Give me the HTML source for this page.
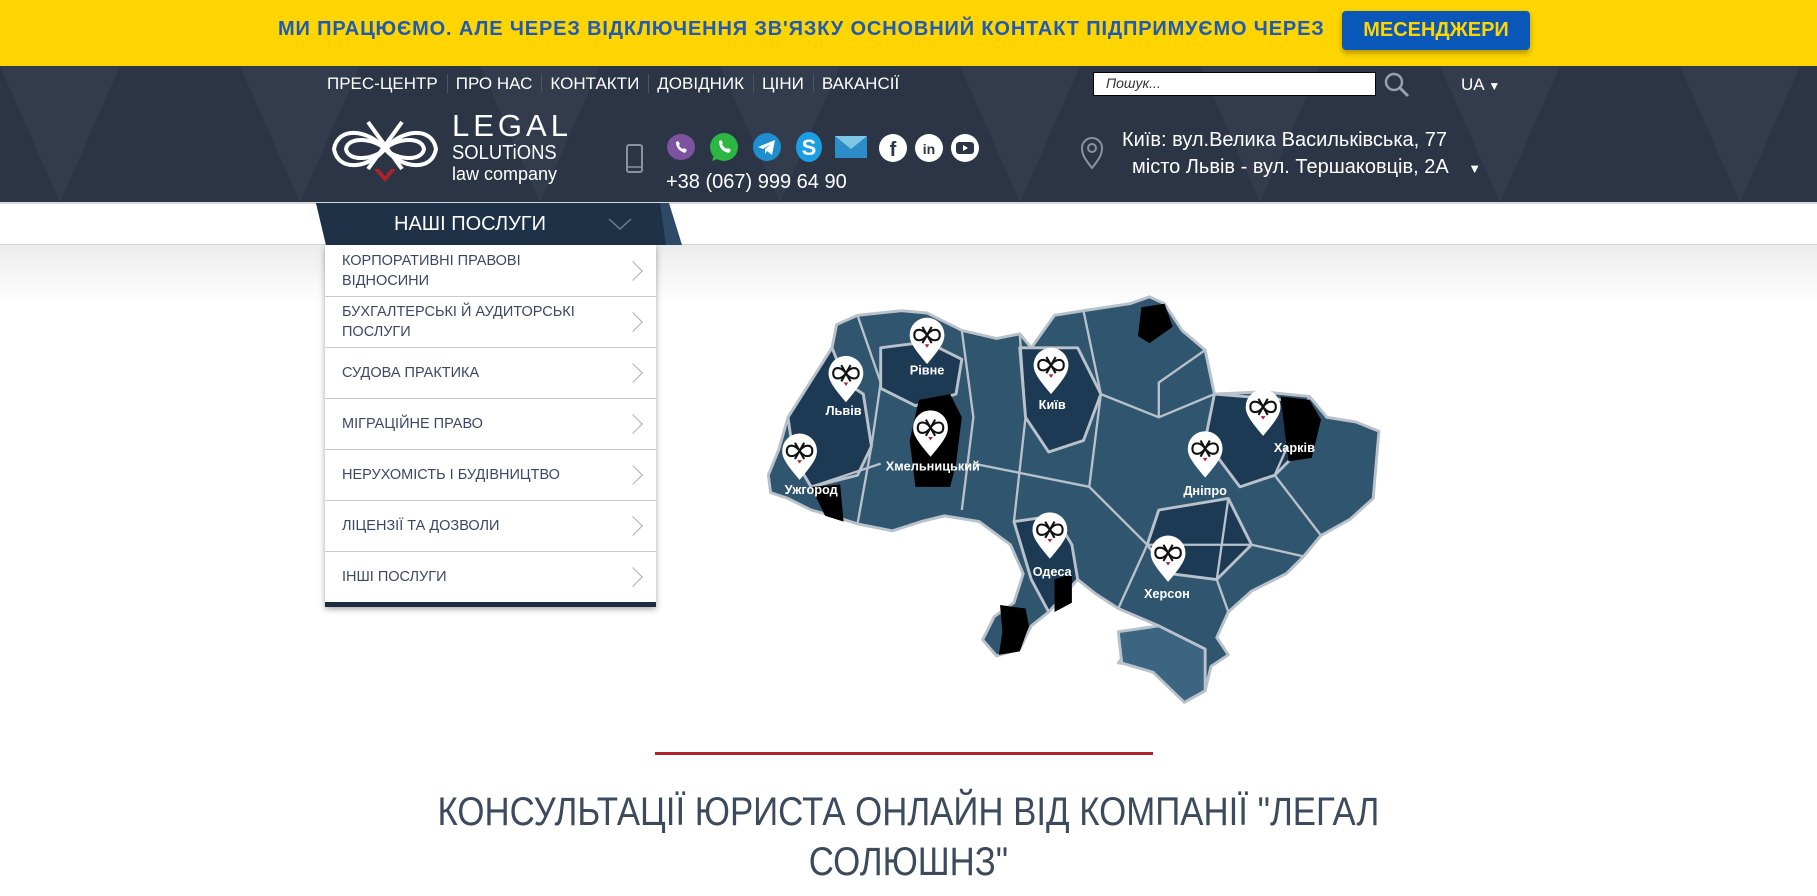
<!DOCTYPE html>
<html><head><meta charset="utf-8"><style>
*{margin:0;padding:0;box-sizing:border-box}
body{width:1817px;height:896px;overflow:hidden;background:#fff;font-family:"Liberation Sans",sans-serif;position:relative}
.abs{position:absolute}
#banner{left:0;top:0;width:1817px;height:66px;background:#fed500}
#banner .t{left:278px;top:18px;font-weight:bold;font-size:20px;color:#1f5bb5;letter-spacing:0.85px;white-space:nowrap}
#banner .b{left:1342px;top:11px;width:188px;height:39px;background:#0a57ba;border-radius:4px;box-shadow:0 3px 6px rgba(0,0,0,.3);color:#fed500;font-weight:bold;font-size:20px;text-align:center;line-height:39px}
#hdr{left:0;top:66px;width:1817px;height:136px;background:#2b3545}
.nav{top:74px;left:327px;color:#fff;font-size:17px;white-space:nowrap}
.nav span{padding:0 9px 0 8px;border-left:1px solid #4a5566}
.nav span:first-child{padding-left:0;border:none}
.search{left:1093px;top:72px;width:283px;height:24px;background:#fff;border:1px solid #000;font-style:italic;font-size:14px;color:#333;padding:2px 12px}
.addr{color:#fff;font-size:20px;white-space:nowrap}
.menu{left:325px;top:245px;width:331px;background:#fff;box-shadow:0 2px 6px rgba(0,0,0,.35);border-bottom:5px solid #1e2e42}
.menu div{height:51px;border-top:1px solid #c7c9d1;color:#3c4766;font-size:14.5px;padding:0 60px 0 17px;display:flex;align-items:center;position:relative;line-height:20px}
.menu div:first-child{border-top:none}
.menu div:after{content:"";position:absolute;right:16px;top:50%;width:13px;height:13px;border-right:1.5px solid #a8aab4;border-top:1.5px solid #a8aab4;transform:translateY(-50%) rotate(45deg)}
h1{position:absolute;left:0;width:1817px;top:787px;text-align:center;font-weight:normal;font-size:40px;line-height:50px;color:#3b4a5c;transform:scaleX(0.87);transform-origin:908px 0}
</style></head><body>
<div id="banner" class="abs"><div class="t abs">МИ ПРАЦЮЄМО. АЛЕ ЧЕРЕЗ ВІДКЛЮЧЕННЯ ЗВ'ЯЗКУ ОСНОВНИЙ КОНТАКТ ПІДПРИМУЄМО ЧЕРЕЗ</div><div class="b abs">МЕСЕНДЖЕРИ</div></div>
<div id="hdr" class="abs">
<svg width="1817" height="136" style="position:absolute;left:0;top:0;opacity:.035"><g fill="#fff"><polygon points="0,0 60,136 120,0"/><polygon points="240,0 300,136 360,0"/><polygon points="480,0 540,136 600,0"/><polygon points="720,0 780,136 840,0"/><polygon points="960,0 1020,136 1080,0"/><polygon points="1200,0 1260,136 1320,0"/><polygon points="1440,0 1500,136 1560,0"/><polygon points="1680,0 1740,136 1800,0"/></g></svg>
</div>
<div class="nav abs"><span>ПРЕС-ЦЕНТР</span><span>ПРО НАС</span><span>КОНТАКТИ</span><span>ДОВІДНИК</span><span>ЦІНИ</span><span>ВАКАНСІЇ</span></div>
<div class="search abs">Пошук...</div>
<svg class="abs" style="left:1383px;top:71px" width="28" height="28"><circle cx="11" cy="11" r="8" fill="none" stroke="#9aa0aa" stroke-width="2.5"/><line x1="17" y1="17" x2="25" y2="25" stroke="#9aa0aa" stroke-width="3"/></svg>
<div class="abs" style="left:1461px;top:75px;color:#fff;font-size:17px">UA <span style="font-size:12px">▼</span></div>
<svg class="abs" style="left:328px;top:114px" width="115" height="75" viewBox="0 0 115 75"><g fill="none" stroke="#fff" stroke-width="4"><path d="M57,35 C40,15 10,12 6,35 C10,58 40,55 57,35 C74,15 104,12 108,35 C104,58 74,55 57,35Z"/><path d="M57,35 C46,24 20,22 18,35 C20,48 46,46 57,35 C68,24 94,22 96,35 C94,48 68,46 57,35Z"/><path d="M40,8 L74,55 M74,8 L40,55"/></g><path d="M46,55 L57,68 L68,55 L63,55 L57,62 L51,55Z" fill="#b0212b"/></svg>
<div class="abs" style="left:452px;top:110px;color:#fff;font-size:31px;letter-spacing:4px;line-height:32px">LEGAL</div>
<div class="abs" style="left:452px;top:143px;color:#fff;font-size:20px;line-height:20px;transform:scaleX(.92);transform-origin:0 0">SOLUTiONS</div>
<div class="abs" style="left:452px;top:164px;color:#fff;font-size:18px;line-height:20px">law company</div>
<svg class="abs" style="left:625px;top:144px" width="20" height="30"><rect x="2" y="1" width="15" height="27" rx="2" fill="none" stroke="#8a92a0" stroke-width="2"/><line x1="3" y1="23" x2="16" y2="23" stroke="#8a92a0" stroke-width="1.5"/></svg>
<svg class="abs" style="left:665px;top:132px" width="320" height="32">
<ellipse cx="16" cy="15" rx="14" ry="13" fill="#7d529e"/><path d="M9,28 l3,-4 l4,0z" fill="#7d529e"/><path d="M11,10 q0,8 9,11 l2,-3 l-3,-2 l-1,1 q-3,-1 -4,-4 l1,-1 l-2,-3z" fill="#fff"/>
<circle cx="59" cy="15" r="14" fill="#2bb741"/><path d="M47,29 l3,-8 l5,5z" fill="#2bb741"/><path d="M54,9 q0,10 10,12 l2,-3 l-3,-2 l-1,1 q-4,-2 -5,-5 l1,-1 l-2,-3z" fill="#fff"/>
<circle cx="102" cy="15" r="14" fill="#1d8fd1"/><path d="M93,15 l17,-7 l-3,15 l-5,-4 l-2,3 l0,-5 l6,-5 l-8,5z" fill="#fff"/>
<ellipse cx="144" cy="15" rx="13" ry="15" fill="#1c9ee3"/><text x="144" y="23" text-anchor="middle" font-size="22" font-weight="bold" fill="#fff" font-family="Liberation Sans">S</text>
<rect x="170" y="4" width="32" height="22" fill="#2b8ec9"/><path d="M170,4 l16,13 l16,-13z" fill="#7fc7e6"/>
<circle cx="228" cy="16" r="14" fill="#fff"/><text x="228" y="24" text-anchor="middle" font-size="20" font-weight="bold" fill="#2b3545" font-family="Liberation Sans">f</text>
<circle cx="264" cy="16" r="14" fill="#fff"/><text x="264" y="22" text-anchor="middle" font-size="14" font-weight="bold" fill="#2b3545" font-family="Liberation Sans">in</text>
<circle cx="300" cy="16" r="14" fill="#fff"/><rect x="291" y="10" width="18" height="12" rx="3" fill="#2b3545"/><path d="M298,13 l5,3 l-5,3z" fill="#fff"/>
</svg>
<div class="abs" style="left:666px;top:171px;color:#fff;font-size:20px">+38 (067) 999 64 90</div>
<svg class="abs" style="left:1080px;top:136px" width="26" height="34"><path d="M12,32 C4,22 2,18 2,12 A10,10 0 0 1 22,12 C22,18 20,22 12,32Z" fill="none" stroke="#8a92a0" stroke-width="2"/><circle cx="12" cy="12" r="4" fill="none" stroke="#8a92a0" stroke-width="2"/></svg>
<div class="addr abs" style="left:1122px;top:129px">Київ: вул.Велика Васильківська, 77</div>
<div class="addr abs" style="left:1132px;top:156px">місто Львів - вул. Тершаковців, 2А <span style="font-size:13px;margin-left:14px">▼</span></div>
<div class="abs" style="left:0;top:202px;width:1817px;height:2px;background:#d6d8dc"></div>
<div class="abs" style="left:0;top:245px;width:1817px;height:60px;background:linear-gradient(#ececec,#fff)"></div>
<div class="abs" style="left:0;top:244px;width:1817px;height:1px;background:#d4d4d4"></div>
<svg class="abs" style="left:314px;top:203px" width="370" height="43"><polygon points="2,0 355,0 368,42 12,42" fill="#2c4a68"/><polygon points="2,0 346,0 352,42 12,42" fill="#1f3147"/></svg>
<div class="abs" style="left:394px;top:213px;color:#fff;font-size:20px">НАШІ ПОСЛУГИ</div>
<svg class="abs" style="left:607px;top:216px" width="26" height="16"><path d="M2,3 L13,13 L24,3" fill="none" stroke="#6f7d90" stroke-width="1.5"/></svg>
<svg class="abs" style="left:0;top:0" width="1817" height="896" viewBox="0 0 1568 773">
<g stroke="#b9c1ca" stroke-width="2.5" stroke-linejoin="round">
<path fill="#30566f" d="M663,410 L672,388 L680,360 L700,330 L718,300 L722,280 L740,272 L778,268 L800,270 L830,285 L860,292 L880,288 L890,300 L910,272 L935,268 L975,262 L992,256 L1005,262 L1020,285 L1040,302 L1048,340 L1090,338 L1130,342 L1145,360 L1170,364 L1190,372 L1188,395 L1185,430 L1165,448 L1140,462 L1125,480 L1110,495 L1080,510 L1060,528 L1050,550 L1060,565 L1045,575 L1040,596 L1022,606 L1010,590 L990,575 L965,572 L980,552 L1000,540 L965,525 L945,512 L930,500 L915,510 L905,528 L890,540 L880,560 L860,566 L848,552 L858,532 L875,520 L883,495 L872,470 L845,450 L815,445 L795,450 L770,458 L740,452 L718,445 L700,440 L680,430 L665,425Z"/>
<path fill="#1d3a55" d="M680,360 L718,300 L730,330 L745,340 L752,385 L740,410 L700,420 L685,395Z"/>
<path fill="#1d3a55" d="M880,300 L930,300 L950,340 L935,380 L905,390 L885,360Z"/>
<path fill="#1d3a55" d="M1048,340 L1110,345 L1130,380 L1100,410 L1070,420 L1040,380Z"/>
<path fill="#1d3a55" d="M1000,440 L1060,430 L1080,470 L1050,500 L1010,495 L990,470Z"/>
<path fill="#1d3a55" d="M875,450 L910,445 L925,470 L930,500 L905,528 L890,500Z"/>
<path fill="#1d3a55" d="M760,300 L800,295 L830,310 L825,340 L790,350 L760,335Z"/>
<path fill="#3b6580" d="M965,545 L1000,540 L1040,560 L1040,596 L1022,606 L995,580 L968,572Z"/>
<g fill="none" stroke-width="2"><path d="M740,272 L760,330 L752,385 L740,452"/><path d="M830,285 L840,360 L830,440"/><path d="M880,288 L885,360 L875,450"/><path d="M935,268 L950,340 L1000,360 L1048,340"/><path d="M950,340 L940,420 L990,470 L1080,470 L1125,480"/><path d="M1040,302 L1000,330 L1000,360"/><path d="M1130,342 L1100,410 L1140,462"/><path d="M840,400 L940,420"/><path d="M990,470 L965,525"/><path d="M700,420 L760,400"/><path d="M1060,430 L1050,500 L1060,528"/></g>
</g>
<g fill="#000"><path d="M985,265 L1005,262 L1012,282 L992,296 L982,290Z"/><path d="M793,345 L820,340 L830,360 L825,400 L820,420 L790,420 L785,380Z"/><path d="M1105,342 L1130,345 L1140,362 L1132,395 L1112,398Z"/><path d="M700,420 L725,418 L728,450 L712,445Z"/><path d="M863,522 L885,525 L888,540 L880,562 L862,565 L865,545Z"/><path d="M910,500 L925,495 L925,520 L910,528Z"/></g>
<defs><g id="p"><path d="M0,22 C-10,10 -15,4 -15,-3 A15,15 0 0 1 15,-3 C15,4 10,10 0,22Z" fill="#fff"/><g fill="none" stroke="#111" stroke-width="1.8"><path d="M0,-3 C-4,-9 -11,-9 -11,-3 C-11,3 -4,3 0,-3 C4,-9 11,-9 11,-3 C11,3 4,3 0,-3Z"/><path d="M-4,-10 L4,4 M4,-10 L-4,4"/></g><path d="M-2,5 L0,8 L2,5Z" fill="#b0212b"/></g></defs>
<use href="#p" x="800" y="292"/><use href="#p" x="730" y="325"/><use href="#p" x="690" y="392"/><use href="#p" x="803" y="372"/><use href="#p" x="907" y="318"/><use href="#p" x="1090" y="354"/><use href="#p" x="1040" y="390"/><use href="#p" x="906" y="460"/><use href="#p" x="1008" y="480"/>
<g font-family="Liberation Sans" font-weight="bold" font-size="11" fill="#fff" text-anchor="middle">
<text x="800" y="323">Рівне</text><text x="728" y="358">Львів</text><text x="700" y="426">Ужгород</text><text x="805" y="406">Хмельницький</text><text x="908" y="353">Київ</text><text x="1117" y="390">Харків</text><text x="1040" y="427">Дніпро</text><text x="908" y="497">Одеса</text><text x="1007" y="516">Херсон</text></g>
</svg>
<div class="menu abs"><div>КОРПОРАТИВНІ ПРАВОВІ ВІДНОСИНИ</div><div>БУХГАЛТЕРСЬКІ Й АУДИТОРСЬКІ ПОСЛУГИ</div><div>СУДОВА ПРАКТИКА</div><div>МІГРАЦІЙНЕ ПРАВО</div><div>НЕРУХОМІСТЬ І БУДІВНИЦТВО</div><div>ЛІЦЕНЗІЇ ТА ДОЗВОЛИ</div><div>ІНШІ ПОСЛУГИ</div></div>
<div class="abs" style="left:655px;top:752px;width:498px;height:3px;background:#b0212b"></div>
<h1>КОНСУЛЬТАЦІЇ ЮРИСТА ОНЛАЙН ВІД КОМПАНІЇ "ЛЕГАЛ<br>СОЛЮШНЗ"</h1>
</body></html>
